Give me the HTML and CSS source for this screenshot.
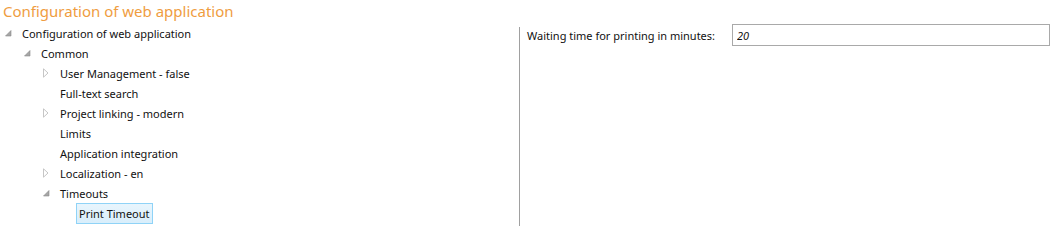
FILE: index.html
```html
<!DOCTYPE html>
<html lang="en">
<head>
    <meta charset="UTF-8">
    <title>Configuration of web application</title>
    <link rel="stylesheet" href="styles.css">
</head>
<body>
    <h1 class="title">Configuration of web application</h1>
    <div class="main">
        <div class="tree">
            <div class="node lvl0"><span class="arrow"><svg width="7" height="7" viewBox="0 0 7 7"><path d="M6 0.5 L6 6 L0.5 6 Z" fill="#a6a6a6" stroke="#8c8c8c" stroke-width="0.6"/></svg></span><span class="label">Configuration of web application</span></div>
            <div class="node lvl1"><span class="arrow"><svg width="7" height="7" viewBox="0 0 7 7"><path d="M6 0.5 L6 6 L0.5 6 Z" fill="#a6a6a6" stroke="#8c8c8c" stroke-width="0.6"/></svg></span><span class="label">Common</span></div>
            <div class="node lvl2"><span class="arrow"><svg width="6" height="10" viewBox="0 0 6 10"><path d="M0.5 0.8 L5 5 L0.5 9.2 Z" fill="none" stroke="#c6c6c6" stroke-width="1"/></svg></span><span class="label">User Management - false</span></div>
            <div class="node lvl2"><span class="arrow"></span><span class="label">Full-text search</span></div>
            <div class="node lvl2"><span class="arrow"><svg width="6" height="10" viewBox="0 0 6 10"><path d="M0.5 0.8 L5 5 L0.5 9.2 Z" fill="none" stroke="#c6c6c6" stroke-width="1"/></svg></span><span class="label">Project linking - modern</span></div>
            <div class="node lvl2"><span class="arrow"></span><span class="label">Limits</span></div>
            <div class="node lvl2"><span class="arrow"></span><span class="label">Application integration</span></div>
            <div class="node lvl2"><span class="arrow"><svg width="6" height="10" viewBox="0 0 6 10"><path d="M0.5 0.8 L5 5 L0.5 9.2 Z" fill="none" stroke="#c6c6c6" stroke-width="1"/></svg></span><span class="label">Localization - en</span></div>
            <div class="node lvl2"><span class="arrow"><svg width="7" height="7" viewBox="0 0 7 7"><path d="M6 0.5 L6 6 L0.5 6 Z" fill="#a6a6a6" stroke="#8c8c8c" stroke-width="0.6"/></svg></span><span class="label">Timeouts</span></div>
            <div class="node lvl3"><span class="arrow"></span><span class="label selected">Print Timeout</span></div>
        </div>
        <div class="panel">
            <div class="field">
                <label class="field-label">Waiting time for printing in minutes:</label>
                <input class="field-input" type="text" value="20">
            </div>
        </div>
    </div>
</body>
</html>
```

FILE: styles.css
```css
body {
    margin: 0;
    font-family: "Noto Sans", "Open Sans", sans-serif;
    font-size: 11px;
    color: #111;
    background: white;
    overflow: hidden;
}
.title {
    margin: 0;
    padding-left: 3px;
    height: 23px;
    line-height: 22px;
    font-size: 15px;
    font-weight: normal;
    color: #ef9d3f;
}
.main {
    display: flex;
}
.tree {
    width: 519px;
}
.node {
    display: flex;
    align-items: center;
    height: 20px;
}
.lvl0 { padding-left: 3px; }
.lvl1 { padding-left: 22px; }
.lvl2 { padding-left: 41px; }
.lvl3 { padding-left: 60px; }
.arrow {
    width: 16px;
    display: flex;
    align-items: center;
    padding-left: 2px;
    box-sizing: border-box;
}
.label {
    padding: 1px 2px;
    border: 1px solid transparent;
    line-height: 17px;
    white-space: nowrap;
}
.selected {
    background: linear-gradient(#e8f5fd, #d9eefb);
    border-color: #8fd3f7;
}
.panel {
    flex: 1;
    margin-top: 4px;
    height: 199px;
    border-left: 1px solid #a0a0a0;
    padding-left: 7px;
}
.field {
    display: flex;
    align-items: center;
    margin-top: -3px;
}
.field-label {
    width: 205px;
    white-space: nowrap;
}
.field-input {
    width: 318px;
    height: 22px;
    box-sizing: border-box;
    border: 1px solid #a9a9a9;
    padding: 0 4px;
    font-family: inherit;
    font-size: 11px;
    font-style: italic;
    color: #111;
    outline: none;
}
```
